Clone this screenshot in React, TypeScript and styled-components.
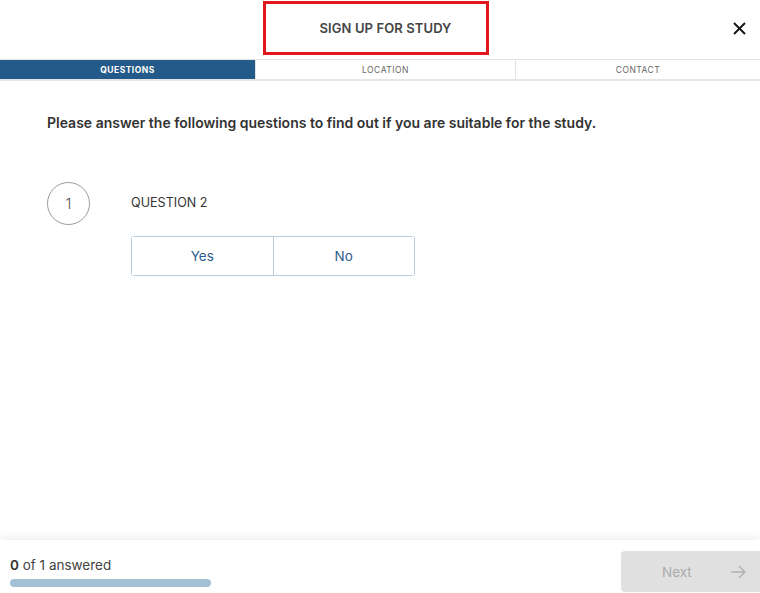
import React from "react";
import styled, { createGlobalStyle } from "styled-components";

const Global = createGlobalStyle`
  html, body { margin: 0; padding: 0; height: 100%; background: #fff; }
  #root { height: 100%; }
  * { box-sizing: border-box; }
  body { font-family: Inter, "Noto Sans", sans-serif; color: #333; }
`;

const Page = styled.div`
  height: 593px;
  display: flex;
  flex-direction: column;
`;

const Header = styled.header`
  height: 59px;
  display: flex;
  align-items: flex-start;
  justify-content: center;
  position: relative;
`;

const TitleBox = styled.div`
  width: 226px;
  height: 54px;
  margin-top: 1px;
  margin-left: -8px;
  padding-left: 19px;
  border: 3px solid #e3161c;
  display: flex;
  align-items: center;
  justify-content: center;
  font-size: 13px;
  font-weight: 600;
  color: #444;
  letter-spacing: 0.1px;
`;

const Close = styled.button`
  position: absolute;
  right: 12px;
  top: 19px;
  width: 18px;
  height: 18px;
  border: 0;
  background: transparent;
  padding: 0;
  cursor: pointer;
  display: flex;
  align-items: center;
  justify-content: center;
`;

const Tabs = styled.nav`
  display: grid;
  grid-template-columns: 255px 260px 1fr;
  height: 22px;
  border-top: 1px solid #e3e3e3;
  border-bottom: 2px solid #e6e6e6;
`;

const Tab = styled.div<{ $active?: boolean }>`
  display: flex;
  align-items: center;
  justify-content: center;
  font-size: 8.5px;
  letter-spacing: 0.5px;
  text-transform: uppercase;
  font-weight: ${(p) => (p.$active ? 700 : 400)};
  color: ${(p) => (p.$active ? "#fff" : "#666")};
  background: ${(p) => (p.$active ? "#245a89" : "#fff")};
  & + & {
    border-left: 1px solid #e3e3e3;
  }
`;

const Content = styled.main`
  flex: 1;
  padding: 33px 47px 0;
`;

const Intro = styled.p`
  margin: 0;
  font-size: 14px;
  font-weight: 600;
  color: #333;
`;

const QuestionRow = styled.div`
  margin-top: 51px;
  display: grid;
  grid-template-columns: 84px auto;
  row-gap: 11px;
`;

const Number = styled.div`
  width: 43px;
  height: 43px;
  border-radius: 50%;
  border: 1px solid #9a9a9a;
  display: flex;
  align-items: center;
  justify-content: center;
  font-size: 15px;
  font-weight: 300;
  color: #555;
`;

const QuestionLabel = styled.div`
  display: flex;
  align-items: center;
  font-size: 12.6px;
  color: #333;
  height: 41px;
`;

const Options = styled.div`
  grid-column: 2;
  display: flex;
  width: 284px;
  height: 40px;
  border: 1px solid #b9cbe0;
  border-radius: 3px;
`;

const Option = styled.button`
  flex: 1;
  border: 0;
  background: #fff;
  font-family: inherit;
  font-size: 13.5px;
  color: #2d5e8e;
  cursor: pointer;
  & + & {
    border-left: 1px solid #b9cbe0;
  }
`;

const Footer = styled.footer`
  height: 53px;
  display: flex;
  align-items: flex-end;
  justify-content: space-between;
  padding: 0 0 1px 10px;
  position: relative;
  box-shadow: 0 -4px 8px rgba(0, 0, 0, 0.06);
`;

const Progress = styled.div`
  display: flex;
  flex-direction: column;
  gap: 6px;
  padding-bottom: 5px;
`;

const Answered = styled.div`
  font-size: 13.5px;
  color: #444;
  b { font-weight: 600; color: #333; }
`;

const Bar = styled.div`
  width: 201px;
  height: 8px;
  border-radius: 4px;
  background: #a3c0d5;
`;

const NextButton = styled.button`
  width: 139px;
  height: 41px;
  border: 0;
  border-radius: 4px 0 0 4px;
  background: #e0e0e0;
  color: #acacac;
  font-family: inherit;
  font-size: 13.5px;
  display: flex;
  align-items: center;
  justify-content: space-between;
  padding: 0 14px 0 41px;
`;

export default function App() {
  return (
    <>
      <Global />
      <Page>
        <Header>
          <TitleBox>SIGN UP FOR STUDY</TitleBox>
          <Close aria-label="Close">
            <svg width="13" height="13" viewBox="0 0 13 13">
              <path d="M1 1L12 12M12 1L1 12" stroke="#111" strokeWidth="1.8" />
            </svg>
          </Close>
        </Header>
        <Tabs>
          <Tab $active>Questions</Tab>
          <Tab>Location</Tab>
          <Tab>Contact</Tab>
        </Tabs>
        <Content>
          <Intro>Please answer the following questions to find out if you are suitable for the study.</Intro>
          <QuestionRow>
            <Number>1</Number>
            <QuestionLabel>QUESTION 2</QuestionLabel>
            <Options>
              <Option>Yes</Option>
              <Option>No</Option>
            </Options>
          </QuestionRow>
        </Content>
        <Footer>
          <Progress>
            <Answered><b>0</b> of 1 answered</Answered>
            <Bar />
          </Progress>
          <NextButton disabled>
            <span>Next</span>
            <svg width="16" height="14" viewBox="0 0 16 14">
              <path d="M1 7H15M9 1L15 7L9 13" stroke="#b0b0b0" strokeWidth="1.4" fill="none" />
            </svg>
          </NextButton>
        </Footer>
      </Page>
    </>
  );
}
